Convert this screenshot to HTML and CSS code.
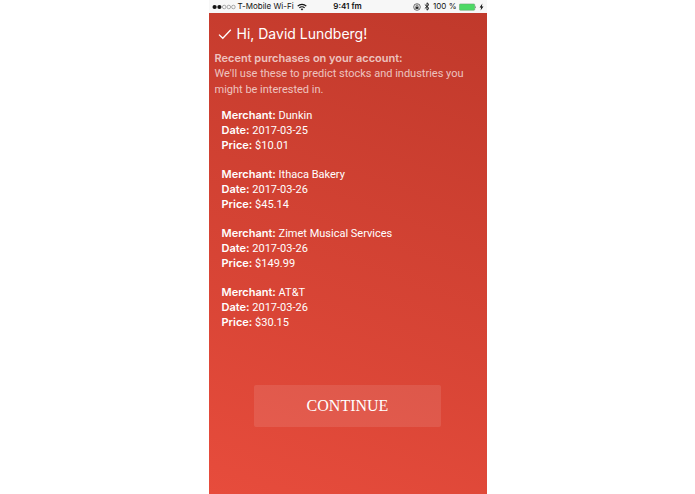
FILE: index.html
```
<!DOCTYPE html>
<html lang="en">
<head>
    <meta charset="UTF-8">
    <meta name="viewport" content="width=device-width, initial-scale=1.0">
    <title>Recent purchases</title>
    <link rel="stylesheet" href="styles.css">
</head>
<body>
    <div class="phone">
        <div class="status-bar">
            <div class="status-left">
                <svg class="signal" viewBox="0 0 24 6" width="24" height="6" aria-hidden="true">
                    <g fill="#111"><circle cx="2.6" cy="3" r="2.1"/><circle cx="7.4" cy="3" r="2.1"/></g>
                    <g fill="none" stroke="#777" stroke-width="0.6"><circle cx="12.2" cy="3" r="1.8"/><circle cx="16.8" cy="3" r="1.8"/><circle cx="21.4" cy="3" r="1.8"/></g>
                </svg>
                <span>T-Mobile Wi-Fi</span>
                <svg class="wifi" viewBox="0 0 10 8" width="10" height="8" aria-hidden="true">
                    <g fill="none" stroke="#111" stroke-width="1.2">
                        <path d="M0.7 3.1a6.1 6.1 0 0 1 8.6 0"/>
                        <path d="M2.4 4.9a3.7 3.7 0 0 1 5.2 0"/>
                    </g>
                    <path d="M3.6 6.1a2 2 0 0 1 2.8 0L5 7.6z" fill="#111"/>
                </svg>
            </div>
            <span class="time">9:41 fm</span>
            <div class="status-right">
                <svg viewBox="0 0 8 8" width="8" height="8" aria-hidden="true">
                    <circle cx="4" cy="4" r="3.3" fill="none" stroke="#333" stroke-width="0.7"/>
                    <rect x="2.5" y="3.7" width="3" height="2.2" fill="#222"/>
                    <path d="M3 3.8v-.8a1 1 0 0 1 2 0v.8" fill="none" stroke="#222" stroke-width="0.6"/>
                </svg>
                <svg class="bluetooth" viewBox="0 0 6 9" width="6" height="9" aria-hidden="true">
                    <path d="M0.8 2.5L5 6.4 3 8.2V0.8L5 2.6 0.8 6.5" fill="none" stroke="#111" stroke-width="0.9"/>
                </svg>
                <span>100 %</span>
                <svg viewBox="0 0 18 8" width="18" height="8" aria-hidden="true">
                    <rect x="0.4" y="0.9" width="15.4" height="6.4" rx="1" fill="#4cd964" stroke="#6b9b73" stroke-width="0.5"/>
                    <path d="M16.4 2.9q1.2 1.2 0 2.4z" fill="#333"/>
                </svg>
                <svg viewBox="0 0 5 8" width="5" height="8" aria-hidden="true">
                    <path d="M3.4 0.6L0.6 4.5h1.6L1.6 7.4 4.5 3.4H2.8z" fill="#111"/>
                </svg>
            </div>
        </div>
        <main class="content">
            <h1 class="greeting">
                <svg viewBox="0 0 14 12" width="14" height="12" aria-hidden="true">
                    <path d="M1 6.6L4.8 10.3 12.8 1.7" fill="none" stroke="#fff" stroke-width="1.3"/>
                </svg>
                <span>Hi, David Lundberg!</span>
            </h1>
            <div class="intro">
                <h2>Recent purchases on your account:</h2>
                <p>We'll use these to predict stocks and industries you might be interested in.</p>
            </div>
            <ul class="purchases">
                <li>
                    <div><b>Merchant:</b> Dunkin</div>
                    <div><b>Date:</b> 2017-03-25</div>
                    <div><b>Price:</b> $10.01</div>
                </li>
                <li>
                    <div><b>Merchant:</b> Ithaca Bakery</div>
                    <div><b>Date:</b> 2017-03-26</div>
                    <div><b>Price:</b> $45.14</div>
                </li>
                <li>
                    <div><b>Merchant:</b> Zimet Musical Services</div>
                    <div><b>Date:</b> 2017-03-26</div>
                    <div><b>Price:</b> $149.99</div>
                </li>
                <li>
                    <div><b>Merchant:</b> AT&amp;T</div>
                    <div><b>Date:</b> 2017-03-26</div>
                    <div><b>Price:</b> $30.15</div>
                </li>
            </ul>
            <button class="continue" type="button">CONTINUE</button>
        </main>
    </div>
</body>
</html>
```

FILE: styles.css
```
* {
    box-sizing: border-box;
}
body {
    margin: 0;
    background: #ffffff;
    font-family: Roboto, "Liberation Sans", sans-serif;
    font-size: 11px;
    line-height: 15px;
    color: white;
}
.phone {
    width: 40%;
    min-width: 278px;
    min-height: 100vh;
    margin: 0 auto;
    display: flex;
    flex-direction: column;
}
.status-bar {
    display: grid;
    grid-template-columns: 1fr auto 1fr;
    align-items: center;
    padding: 0 3px;
    background: #f7f7f7;
    color: #111111;
    font-family: Inter, "Liberation Sans", sans-serif;
    font-size: 8px;
    line-height: 13px;
}
.status-left,
.status-right {
    display: flex;
    align-items: center;
    gap: 2px;
    white-space: nowrap;
}
.status-right {
    justify-content: flex-end;
}
.wifi,
.bluetooth {
    margin: 0 1px;
}
.time {
    font-weight: 600;
}
.content {
    flex: 1;
    display: flex;
    flex-direction: column;
    padding: 11px 6px 20px;
    background: linear-gradient(200deg, #c0392b, #e74c3c);
}
.greeting {
    display: flex;
    align-items: center;
    gap: 5px;
    margin: 0 0 6px;
    padding-left: 3px;
    font-family: Inter, "Liberation Sans", sans-serif;
    font-size: 14px;
    font-weight: 400;
    line-height: 20px;
}
.intro {
    line-height: 16px;
    color: rgba(255, 255, 255, 0.7);
}
.intro h2,
.intro p {
    margin: 0;
    font-size: 11px;
}
.intro h2,
.purchases b {
    font-family: Inter, "Liberation Sans", sans-serif;
    font-weight: 600;
}
.purchases {
    display: flex;
    flex-direction: column;
    gap: 14px;
    margin: 10px 0 55px;
    padding: 0 7px;
    list-style: none;
}
.continue {
    align-self: center;
    width: 70%;
    height: 42px;
    border: none;
    border-radius: 2px;
    background: rgba(255, 255, 255, 0.1);
    color: white;
    font-family: "Liberation Serif", serif;
    font-size: 16px;
    cursor: pointer;
}
.continue:hover {
    background: rgba(255, 255, 255, 0.2);
}
```
